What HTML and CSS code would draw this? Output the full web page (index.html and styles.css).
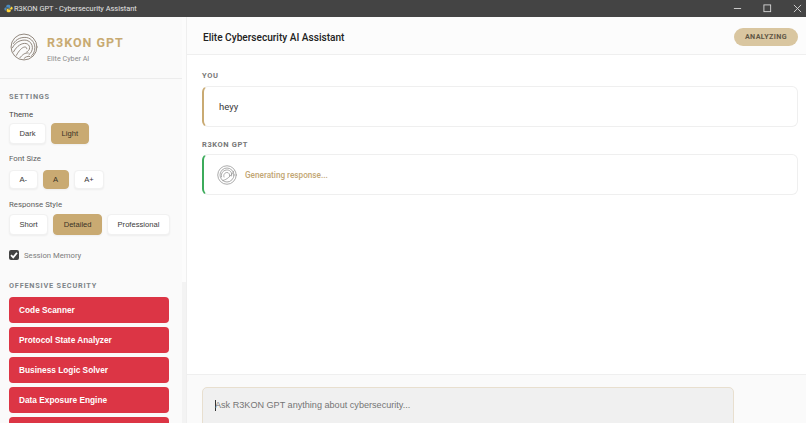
FILE: index.html
```html
<!DOCTYPE html>
<html lang="en">
<head>
  <meta charset="UTF-8">
  <meta name="viewport" content="width=device-width, initial-scale=1.0">
  <title>R3KON GPT - Cybersecurity Assistant</title>
  <link rel="stylesheet" href="styles.css">
</head>
<body>
  <svg class="defs" width="0" height="0" aria-hidden="true">
    <symbol id="logo" viewBox="0 0 40 40">
      <g fill="none" stroke-linecap="round">
        <circle cx="20" cy="20" r="18.500"/>
        <path d="M5 15C9 8 17 5.500 24 6.500C31 8 35.500 14 35.500 21C35.500 27 33 31 30 33.500"/>
        <path d="M3.500 21C8 12 17 9 24 10.500C29 12 32 16 32 21C32 25 30 29 27 31"/>
        <path d="M5 27C10 18 17 14 23 15C26 16 28 18 28 21C28 24 26 26 24 27"/>
        <path d="M9 32C13 25 17 20.500 21 20C23 20 24 21 24 22.500"/>
        <path d="M14 35.500C18 31 21 28 26 28.500"/>
        <path d="M20 36.500C22 34 25 33 28 33.500"/>
      </g>
    </symbol>
    <symbol id="logo-small" viewBox="0 0 40 40">
      <g fill="none" stroke-linecap="round">
        <circle cx="20" cy="20" r="18.500"/>
        <circle cx="20" cy="20" r="14"/>
        <path d="M9 24C7 15 14 9.500 21 10C27 10.500 31 16 29 22"/>
        <path d="M14 24C12 19 16 15 20 15C24 15 26 19 25 22"/>
        <path d="M12 31C20 29 27 23 34 12"/>
      </g>
    </symbol>
  </svg>

  <div class="titlebar">
    <div class="titlebar-name">
      <svg class="py-icon" viewBox="0 0 12 12">
        <path fill="#4b8bbe" d="M6 1C4 1 3 1.700 3 3v1h3.200v.6H2C1 4.600.5 5.400.5 6.500S1 8.500 2 8.500h1V7.200C3 6.200 3.800 5.700 4.800 5.700h2.400C8 5.700 8.500 5.200 8.500 4.400V3C8.500 1.700 7.500 1 6 1z"/>
        <path fill="#ffd43b" d="M6 11c2 0 3-.7 3-2V8H5.800v-.6H10c1 0 1.500-.8 1.500-1.900S11 3.500 10 3.500H9v1.300c0 1-.8 1.500-1.800 1.500H4.800c-.8 0-1.300.5-1.300 1.300V9c0 1.300 1 2 2.500 2z"/>
      </svg>
      <span>R3KON GPT - Cybersecurity Assistant</span>
    </div>
    <div class="window-controls">
      <svg viewBox="0 0 10 10"><path d="M1 5h8"/></svg>
      <svg viewBox="0 0 10 10"><rect x="1" y="1" width="7.500" height="7.500"/></svg>
      <svg viewBox="0 0 10 10"><path d="M1 1l8 8M9 1l-8 8"/></svg>
    </div>
  </div>

  <div class="app">
    <aside class="sidebar">
      <div class="brand">
        <svg class="brand-logo"><use href="#logo"/></svg>
        <div class="brand-text">
          <div class="brand-name">R3KON GPT</div>
          <div class="brand-sub">Elite Cyber AI</div>
        </div>
      </div>

      <div class="settings">
        <h4 class="section-title">SETTINGS</h4>
        <div class="field-label label-theme">Theme</div>
        <div class="btn-row">
          <button class="opt opt-lg">Dark</button>
          <button class="opt opt-lg active">Light</button>
        </div>
        <div class="field-label label-font">Font Size</div>
        <div class="btn-row">
          <button class="opt opt-sm">A-</button>
          <button class="opt opt-sm active">A</button>
          <button class="opt opt-sm">A+</button>
        </div>
        <div class="field-label label-style">Response Style</div>
        <div class="btn-row">
          <button class="opt opt-lg">Short</button>
          <button class="opt opt-lg active">Detailed</button>
          <button class="opt opt-lg">Professional</button>
        </div>
        <label class="memory">
          <span class="checkbox">
            <svg viewBox="0 0 10 10"><path d="M2 5.200l2.200 2.200L8 2.800"/></svg>
          </span>
          Session Memory
        </label>
        <h4 class="section-title section-offensive">OFFENSIVE SECURITY</h4>
        <div class="tools">
          <button class="tool">Code Scanner</button>
          <button class="tool">Protocol State Analyzer</button>
          <button class="tool">Business Logic Solver</button>
          <button class="tool">Data Exposure Engine</button>
          <button class="tool"></button>
        </div>
      </div>
    </aside>

    <div class="scroll-track"><div class="scroll-thumb"></div></div>

    <main class="main">
      <div class="topbar">
        <h1>Elite Cybersecurity AI Assistant</h1>
        <span class="status">ANALYZING</span>
      </div>

      <div class="chat">
        <div class="msg-label">YOU</div>
        <div class="msg msg-user">heyy</div>
        <div class="msg-label label-bot">R3KON GPT</div>
        <div class="msg msg-bot">
          <svg class="msg-logo"><use href="#logo-small"/></svg>
          <span>Generating response...</span>
        </div>
      </div>

      <div class="composer">
        <div class="input-box">
          <span class="caret"></span>
          <span>Ask R3KON GPT anything about cybersecurity...</span>
        </div>
      </div>
    </main>
  </div>
</body>
</html>
```

FILE: styles.css
```css
* { margin: 0; padding: 0; box-sizing: border-box; }
html, body {
  height: 423px;
  overflow: hidden;
}
body {
  font-family: Roboto, "Open Sans", sans-serif;
  background: #fff;
  color: #2b2b2b;
}
.defs { position: absolute; }

.titlebar {
  height: 17px;
  background: #444;
  color: #e4e4e4;
  display: flex;
  justify-content: space-between;
  align-items: center;
  font-size: 7.400px;
}
.titlebar-name {
  display: flex;
  align-items: center;
  gap: 1px;
  padding-left: 4px;
}
.py-icon { width: 9px; height: 9px; }
.window-controls {
  display: flex;
  gap: 21px;
  padding-right: 4px;
}
.window-controls svg {
  width: 9px;
  height: 9px;
  fill: none;
  stroke: #d8d8d8;
  stroke-width: 1;
}

.app {
  display: flex;
  height: 406px;
}
.sidebar {
  width: 182px;
  background: #fafafa;
  overflow: hidden;
  flex-shrink: 0;
}
.scroll-track {
  width: 5px;
  background: #fcfcfc;
  border-right: 1px solid #efefef;
  padding-top: 265px;
}
.scroll-thumb {
  height: 141px;
  background: #f3f3f3;
}

.brand {
  height: 62px;
  display: flex;
  align-items: center;
  gap: 9px;
  padding-left: 10px;
  padding-bottom: 2px;
  border-bottom: 1px solid #ececec;
}
.brand-logo {
  width: 28px;
  height: 28px;
  stroke: #8f857b;
  stroke-width: 1.400;
}
.brand-text { margin-top: 5px; }
.brand-name {
  font-size: 12.500px;
  font-weight: 700;
  letter-spacing: 1px;
  color: #c8aa72;
  line-height: 16px;
}
.brand-sub {
  font-size: 7.200px;
  color: #8c8c8c;
  line-height: 11px;
  margin-top: 2px;
}

.settings { padding: 13px 9px 0; }
.section-title {
  font-size: 7.300px;
  font-weight: 700;
  letter-spacing: 0.800px;
  color: #7d8488;
  line-height: 10px;
}
.field-label {
  font-size: 7.800px;
  color: #5d5d5d;
  line-height: 12px;
}
.label-theme { margin-top: 7px; margin-bottom: 2px; color: #444; }
.label-font { margin-top: 9px; margin-bottom: 5px; }
.label-style { margin-top: 10px; margin-bottom: 3px; }

.btn-row {
  display: flex;
  gap: 5px;
}
.opt {
  font-family: "Liberation Sans", Arial, sans-serif;
  font-size: 7.600px;
  color: #3a3a3a;
  background: #fff;
  border: 1px solid #f1f1f1;
  border-radius: 4px;
  padding: 0 9.500px;
  box-shadow: 0 1px 2px rgba(0,0,0,0.05);
}
.opt-lg { height: 21px; }
.opt-sm { height: 19px; }
.opt.active {
  background: #c9aa72;
  border-color: #c9aa72;
  color: #3a3226;
}

.memory {
  display: flex;
  align-items: center;
  gap: 5px;
  margin-top: 15px;
  font-size: 7.700px;
  color: #7c7c7c;
}
.checkbox {
  width: 10px;
  height: 10px;
  background: #444;
  border-radius: 2px;
  display: flex;
}
.checkbox svg {
  fill: none;
  stroke: #fff;
  stroke-width: 1.800;
}
.section-offensive { margin-top: 21px; }

.tools {
  display: flex;
  flex-direction: column;
  gap: 4px;
  margin-top: 6px;
  width: 160px;
}
.tool {
  height: 26px;
  flex-shrink: 0;
  background: #dc3545;
  color: #fff;
  border: none;
  border-radius: 4px;
  font-family: "Liberation Sans", Arial, sans-serif;
  font-size: 8.300px;
  font-weight: 700;
  text-align: left;
  padding-left: 10px;
}

.main {
  flex: 1;
  display: flex;
  flex-direction: column;
  min-width: 0;
}
.topbar {
  height: 38px;
  background: #fcfcfc;
  border-bottom: 1px solid #efefef;
  display: flex;
  justify-content: space-between;
  align-items: center;
  padding: 2px 8px 0 16px;
}
.topbar h1 {
  font-size: 10.100px;
  font-weight: 500;
  color: #222;
  margin-top: 2px;
}
.status {
  width: 64px;
  height: 18px;
  background: #d9c6a0;
  color: #5f5646;
  border-radius: 9px;
  font-size: 7.200px;
  font-weight: 700;
  letter-spacing: 0.400px;
  display: flex;
  justify-content: center;
  align-items: center;
}

.chat {
  flex: 1;
  padding: 16px 8px 0 15px;
}
.msg-label {
  font-size: 7.500px;
  font-weight: 700;
  letter-spacing: 0.600px;
  color: #777;
  line-height: 10px;
  margin-bottom: 5px;
}
.label-bot { margin-top: 13px; margin-bottom: 4px; }
.msg {
  height: 41px;
  background: #fff;
  border: 1px solid #efefef;
  border-radius: 6px;
  display: flex;
  align-items: center;
}
.msg-user {
  border-left: 2px solid #c9aa72;
  padding: 0 0 1px 15px;
  font-size: 9.500px;
  color: #3a3a3a;
}
.msg-bot {
  border-left: 2px solid #3cab5b;
  padding-left: 13px;
  gap: 8px;
  font-size: 8.200px;
  font-weight: 500;
  color: #c2a673;
}
.msg-logo {
  width: 20px;
  height: 20px;
  stroke: #8f8f8f;
  stroke-width: 1.500;
}

.composer {
  height: 49px;
  background: #fafafa;
  border-top: 1px solid #efefef;
  padding: 12px 0 0 15px;
  overflow: hidden;
}
.input-box {
  width: 532px;
  height: 60px;
  background: #f0f0f0;
  border: 1px solid #e8dfcf;
  border-radius: 5px;
  padding: 12px 12px;
  font-family: "Liberation Sans", Arial, sans-serif;
  font-size: 9.100px;
  line-height: 11px;
  color: #757575;
  display: flex;
  align-items: flex-start;
}
.caret {
  width: 1px;
  height: 11px;
  background: #333;
  margin-right: -1px;
}
```
